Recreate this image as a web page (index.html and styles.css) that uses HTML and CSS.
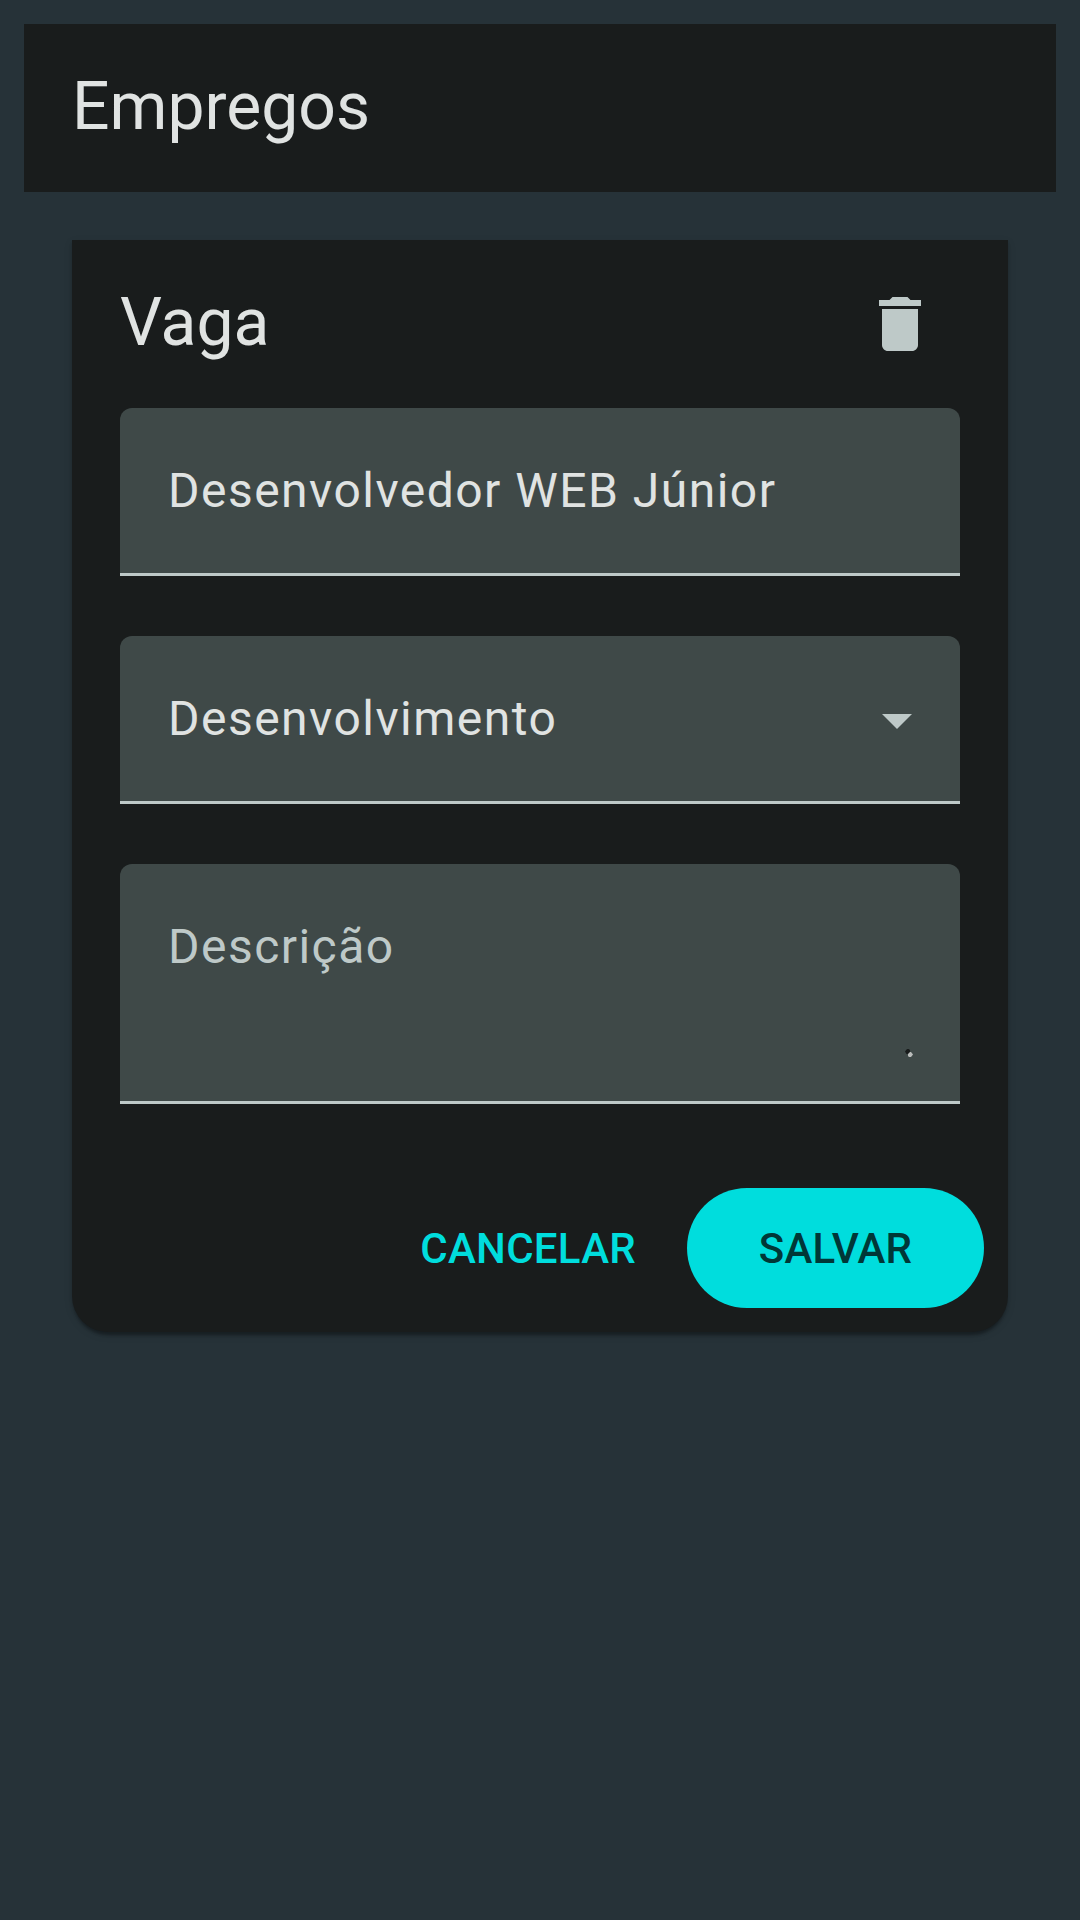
FILE: index.html
```html
<!DOCTYPE html>
<html lang="pt-BR">
<head>
<meta charset="utf-8">
<title>Empregos</title>
<link rel="stylesheet" href="styles.css">
</head>
<body>
<header class="toolbar"><h1 class="title">Empregos</h1></header>
<main class="card">
  <div class="card-header">
    <h2 class="title">Vaga</h2>
    <svg class="trash" viewBox="0 0 24 24"><path d="M6 19c0 1.1.9 2 2 2h8c1.1 0 2-.9 2-2V7H6v12zM19 4h-3.500l-1-1h-5l-1 1H5v2h14V4z"/></svg>
  </div>
  <div class="field"><span>Desenvolvedor WEB Júnior</span></div>
  <div class="field"><span>Desenvolvimento</span><svg class="arrow" viewBox="0 0 10 5"><path d="M0 0h10L5 5z"/></svg></div>
  <div class="field area"><span class="placeholder">Descrição</span><svg class="grip" viewBox="0 0 8 8"><path class="dark" d="M0 2.500L2 0h2l1 1.500V4L3.500 5H1.500z"/><path d="M3 5l2-2 1 0 2 2.500L6 8H4L3 7z"/></svg></div>
  <div class="actions"><button class="btn">CANCELAR</button><button class="btn primary">SALVAR</button></div>
</main>
</body>
</html>
```
FILE: styles.css
```css
* { box-sizing: border-box; }
body { margin: 0; padding: 24px; min-height: 1920px; background: #263238; color: #e0e3e2; font-family: Roboto, sans-serif; }
.toolbar { height: 168px; padding: 48px; background: #191c1c; }
.title { margin: 0; font-size: 66px; font-weight: 400; line-height: 70px; }
.card { margin: 48px 48px 0; height: 1092px; background: #191c1c; border-radius: 0 0 36px 36px; box-shadow: 0 6px 3px -3px rgba(0,0,0,.2), 0 3px 3px rgba(0,0,0,.14), 0 3px 9px rgba(0,0,0,.12); }
.card-header { height: 168px; padding: 48px 72px 0 48px; display: flex; justify-content: space-between; }
.trash { width: 72px; height: 72px; fill: #bec9c8; }
.field { height: 168px; margin: 0 48px 60px; padding: 0 48px; display: flex; align-items: center; justify-content: space-between; background: #3f4948; border-bottom: 3px solid #bec9c8; border-radius: 12px 12px 0 0; font-size: 48px; line-height: 72px; letter-spacing: 1.47px; }
.arrow { width: 30px; height: 15px; margin-top: 6px; fill: #bec9c8; }
.area { height: 240px; padding: 47px 47px 0 48px; align-items: flex-start; margin-bottom: 84px; }
.placeholder { color: #bec9c8; }
.grip { width: 8px; height: 8px; align-self: flex-end; fill: #babcbb; margin-bottom: 44px; }
.dark { fill: #191c1c; }
.actions { display: flex; justify-content: flex-end; gap: 15px; padding-right: 24px; }
.btn { height: 120px; border: 0; padding: 2px 36px 0; background: none; border-radius: 60px; color: #00dddd; font: 500 42px/60px Roboto, sans-serif; letter-spacing: .268px; }
.primary { width: 297px; padding: 2px 0 0; background: #00dddd; color: #003737; }
```
